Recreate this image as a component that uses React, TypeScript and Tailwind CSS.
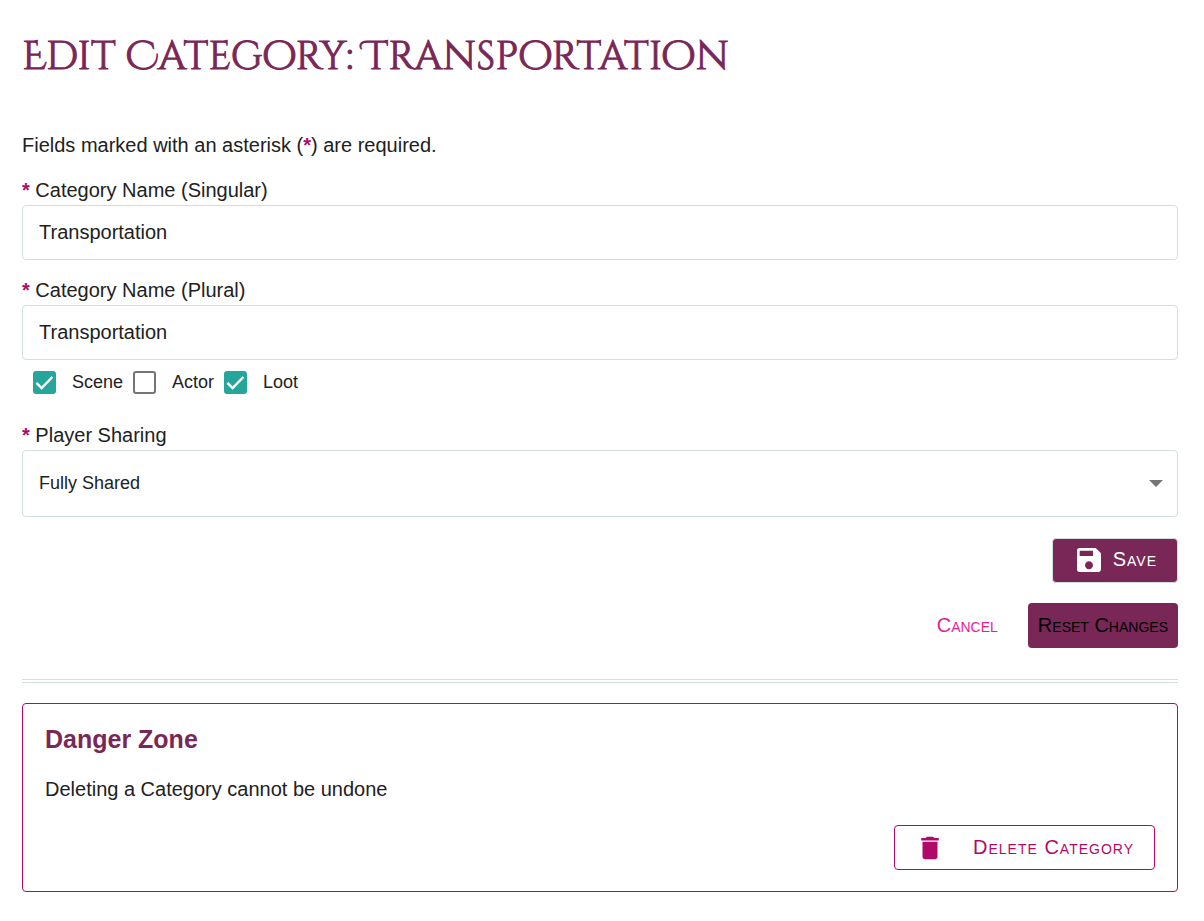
import { useState } from 'react';
import type { ReactNode } from 'react';
import { MdDelete, MdSave } from 'react-icons/md';

const SHARING_OPTIONS = [
  { value: 'full', label: 'Fully Shared' },
  { value: 'partial', label: 'Partially Shared' },
  { value: 'none', label: 'Not Shared' },
];

function Required() {
  return <span className="font-bold text-[#af0a6a]">*</span>;
}

interface FieldProps {
  id: string;
  label: string;
  children: ReactNode;
}

function Field({ id, label, children }: FieldProps) {
  return (
    <div className="flex flex-col">
      <label htmlFor={id} className="leading-[30px]">
        <Required /> {label}
      </label>
      {children}
    </div>
  );
}

interface TextInputProps {
  id: string;
  value: string;
  onChange: (value: string) => void;
}

function TextInput({ id, value, onChange }: TextInputProps) {
  return (
    <input
      id={id}
      type="text"
      value={value}
      onChange={e => onChange(e.target.value)}
      className="w-full h-[55px] px-4 rounded border border-[#d2dfdf] bg-white outline-none focus:border-[#26a69a]"
    />
  );
}

interface CheckboxProps {
  id: string;
  label: string;
  checked: boolean;
  onChange: (checked: boolean) => void;
}

function Checkbox({ id, label, checked, onChange }: CheckboxProps) {
  return (
    <div className="flex items-center">
      <span className="relative flex">
        <input
          id={id}
          type="checkbox"
          checked={checked}
          onChange={e => onChange(e.target.checked)}
          className="appearance-none size-[23px] rounded-[3px] border-2 border-[#757575] checked:border-[#26a69a] checked:bg-[#26a69a]"
        />
        {checked && (
          <svg viewBox="0 0 23 23" className="absolute inset-0 size-full pointer-events-none" fill="none" stroke="#fff" strokeWidth="2.4">
            <path d="M3.4 11.8 8.6 17 19.4 6" />
          </svg>
        )}
      </span>
      <label htmlFor={id} className="pl-4 text-lg leading-6">{label}</label>
    </div>
  );
}

export default function App() {
  const [singular, setSingular] = useState('Transportation');
  const [plural, setPlural] = useState('Transportation');
  const [isScene, setIsScene] = useState(true);
  const [isActor, setIsActor] = useState(false);
  const [isLoot, setIsLoot] = useState(true);
  const [sharing, setSharing] = useState('full');

  const reset = () => {
    setSingular('Transportation');
    setPlural('Transportation');
    setIsScene(true);
    setIsActor(false);
    setIsLoot(true);
    setSharing('full');
  };

  return (
    <main className="pl-[22px] pr-[26px] pt-[27px] pb-7 bg-white text-[#212121] text-xl font-['Liberation_Sans',Arial,sans-serif]">
      <h1 className="text-[40px] leading-[60px] text-[#792757] [-webkit-text-stroke:1px_#792757] font-['Cinzel_Decorative','Liberation_Serif',serif]">
        Edit Category: Transportation
      </h1>

      <p className="mt-[43px] leading-[30px]">
        Fields marked with an asterisk (<Required />) are required.
      </p>

      <form onSubmit={e => e.preventDefault()} className="mt-[15px]">
        <div className="flex flex-col gap-[15px]">
          <Field id="singular" label="Category Name (Singular)">
            <TextInput id="singular" value={singular} onChange={setSingular} />
          </Field>
          <Field id="plural" label="Category Name (Plural)">
            <TextInput id="plural" value={plural} onChange={setPlural} />
          </Field>
        </div>

        <div className="flex gap-[10px] pl-[11px] pt-[10px] pb-[26px]">
          <Checkbox id="scene" label="Scene" checked={isScene} onChange={setIsScene} />
          <Checkbox id="actor" label="Actor" checked={isActor} onChange={setIsActor} />
          <Checkbox id="loot" label="Loot" checked={isLoot} onChange={setIsLoot} />
        </div>

        <Field id="sharing" label="Player Sharing">
          <div className="relative">
            <select
              id="sharing"
              value={sharing}
              onChange={e => setSharing(e.target.value)}
              className="appearance-none w-full h-[67px] px-4 pb-0.5 rounded border border-[#d2dfdf] bg-white text-lg outline-none focus:border-[#26a69a]"
            >
              {SHARING_OPTIONS.map(o => (
                <option key={o.value} value={o.value}>{o.label}</option>
              ))}
            </select>
            <svg viewBox="0 0 14 7" className="absolute right-[15px] top-[30px] w-[14px] h-[7px] pointer-events-none" fill="#757575">
              <path d="M0 0h14L7 7z" />
            </svg>
          </div>
        </Field>

        {/* Actions */}
        <div className="mt-[21px] flex flex-col items-end gap-5">
          <button
            type="submit"
            className="flex items-center gap-2 h-[45px] px-5 pb-0.5 rounded border border-[#d2dfdf] bg-[#792757] text-white tracking-wider [font-variant:small-caps]"
          >
            <MdSave className="size-8" />
            <span className="pb-0.5">Save</span>
          </button>
          <div className="flex items-center gap-5">
            <button type="button" className="h-[45px] px-[10px] pb-0.5 text-[#e91e8c] [font-variant:small-caps]">Cancel</button>
            <button
              type="button"
              onClick={reset}
              className="h-[45px] px-[10px] pb-0.5 rounded bg-[#792757] text-black [font-variant:small-caps]"
            >
              Reset Changes
            </button>
          </div>
        </div>
      </form>

      <hr className="mt-[31px] mb-5 border-t-4 border-double border-[#d2dfdf]" />

      <section className="px-[22px] pt-[17px] pb-[21px] rounded border border-[#af0a6a]">
        <h2 className="text-[25px] leading-9 font-bold text-[#792757]">Danger Zone</h2>
        <p className="mt-[17px] leading-[30px]">Deleting a Category cannot be undone</p>
        <div className="mt-[21px] flex justify-end">
          <button
            type="button"
            className="flex items-center gap-7 h-[45px] px-5 rounded border border-[#af0a6a] text-[#af0a6a] tracking-wider [font-variant:small-caps]"
          >
            <MdDelete className="size-[30px]" />
            <span className="pb-0.5">Delete Category</span>
          </button>
        </div>
      </section>
    </main>
  );
}
